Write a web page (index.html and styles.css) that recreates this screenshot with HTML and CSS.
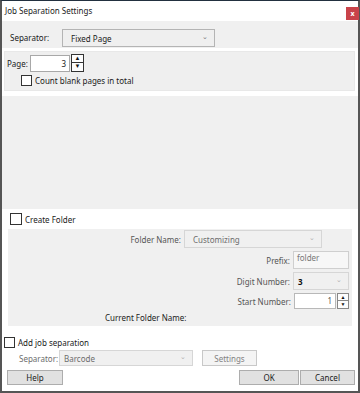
FILE: index.html
```html
<!DOCTYPE html>
<html lang="en">
<head>
    <meta charset="UTF-8">
    <title>Job Separation Settings</title>
    <link rel="stylesheet" href="styles.css">
</head>
<body>
    <div class="dialog">
        <div class="titlebar">
            <span class="title">Job Separation Settings</span>
            <span class="close">x</span>
        </div>

        <div class="sep-bar">
            <span class="sep-label">Separator:</span>
            <div class="select sel-main">Fixed Page<span class="chev">&#8964;</span></div>
        </div>

        <div class="page-panel">
            <div class="page-row">
                <span class="page-label">Page:</span>
                <div class="num-input page-input">3</div>
                <div class="spin">
                    <span class="spin-btn">&#9650;</span>
                    <span class="spin-btn">&#9660;</span>
                </div>
            </div>
            <label class="check-row count-row">
                <span class="box"></span>Count blank pages in total
            </label>
        </div>

        <div class="blank-area"></div>

        <label class="check-row folder-head">
            <span class="box"></span>Create Folder
        </label>

        <div class="folder-panel">
            <div class="f-row f-name">
                <span class="f-label">Folder Name:</span>
                <div class="select sel-folder disabled">Customizing<span class="chev">&#8964;</span></div>
            </div>
            <div class="f-row">
                <span class="f-label">Prefix:</span>
                <div class="text-input">folder</div>
            </div>
            <div class="f-row">
                <span class="f-label">Digit Number:</span>
                <div class="select sel-digit">3<span class="chev">&#8964;</span></div>
            </div>
            <div class="f-row">
                <span class="f-label">Start Number:</span>
                <div class="num-input start-input">1</div>
                <div class="spin small">
                    <span class="spin-btn">&#9650;</span>
                    <span class="spin-btn">&#9660;</span>
                </div>
            </div>
            <div class="current">Current Folder Name:</div>
        </div>

        <label class="check-row job-row">
            <span class="box"></span>Add job separation
        </label>
        <div class="job-sep">
            <span class="job-label">Separator:</span>
            <div class="select sel-job disabled">Barcode<span class="chev">&#8964;</span></div>
            <button class="btn btn-settings" disabled>Settings</button>
        </div>

        <div class="btn-row">
            <button class="btn btn-help">Help</button>
            <div class="btn-right">
                <button class="btn btn-ok">OK</button>
                <button class="btn btn-cancel">Cancel</button>
            </div>
        </div>
    </div>
</body>
</html>
```

FILE: styles.css
```css
body {
    margin: 0;
    padding: 0;
    background: #f0f0f0;
    font-family: 'Noto Sans', 'Open Sans', sans-serif;
    font-size: 8px;
    color: #1a1a1a;
}
.dialog {
    width: 356px;
    height: 390px;
    border: 2px solid #555;
    border-top: 1px solid #22303f;
    background: #fff;
    display: flex;
    flex-direction: column;
}
.titlebar {
    height: 20px;
    display: flex;
    align-items: center;
    justify-content: space-between;
    padding-left: 3px;
    box-sizing: border-box;
}
.title {
    margin-top: -1px;
}
.close {
    width: 13px;
    height: 13px;
    background: #c9434a;
    color: #fff;
    font-size: 7px;
    font-weight: bold;
    display: flex;
    align-items: center;
    justify-content: center;
    margin-top: 4px;
    margin-right: -1px;
}
.sep-bar {
    height: 27px;
    background: #f0f0f0;
    display: flex;
    align-items: flex-end;
    padding: 0 0 1px 8px;
    box-sizing: border-box;
}
.sep-label {
    width: 52px;
    height: 18px;
    line-height: 18px;
}
.select {
    height: 18px;
    box-sizing: border-box;
    border: 1px solid #b4b4b4;
    background: #efefef;
    display: flex;
    align-items: center;
    justify-content: space-between;
    padding: 0 6px 0 8px;
}
.select.disabled {
    border-color: #d6d6d6;
    color: #6d6d6d;
}
.chev {
    font-size: 7px;
    color: #777;
    margin-top: -4px;
}
.disabled .chev {
    color: #b0b0b0;
}
.sel-main {
    width: 153px;
}
.page-panel {
    margin: 3px 3px 0 2px;
    height: 40px;
    background: #efefef;
    border: 1px solid #e8e8e8;
    box-sizing: border-box;
}
.page-row {
    display: flex;
    align-items: center;
    margin-top: 2px;
}
.page-label {
    width: 23px;
    padding-left: 2px;
}
.num-input {
    height: 17px;
    box-sizing: border-box;
    border: 1px solid #a8a8a8;
    background: #fff;
    text-align: right;
    line-height: 15px;
    padding-right: 3px;
}
.page-input {
    width: 40px;
}
.spin {
    display: flex;
    flex-direction: column;
    margin-left: 1px;
}
.spin-btn {
    width: 13px;
    height: 9px;
    box-sizing: border-box;
    border: 1px solid #333;
    background: #fdfdfd;
    font-size: 6px;
    line-height: 7px;
    text-align: center;
    color: #111;
}
.spin-btn + .spin-btn {
    border-top: none;
}
.spin.small .spin-btn {
    width: 12px;
    height: 8px;
    font-size: 5px;
    line-height: 6px;
    border-color: #888;
}
.check-row {
    display: flex;
    align-items: center;
}
.box {
    width: 11px;
    height: 11px;
    box-sizing: border-box;
    border: 1px solid #333;
    background: #fff;
    margin-right: 3px;
}
.count-row {
    margin-top: 3px;
    padding-left: 16px;
}
.blank-area {
    margin-top: 5px;
    height: 113px;
    background: #f0f0f0;
}
.folder-head {
    height: 20px;
    padding-left: 8px;
}
.folder-head .box {
    width: 12px;
    height: 12px;
}
.folder-panel {
    margin: 0 6px;
    height: 97px;
    background: #f0f0f0;
    color: #555;
    padding-top: 1px;
    box-sizing: border-box;
}
.f-row {
    display: flex;
    justify-content: flex-end;
    align-items: center;
    padding-right: 3px;
    margin-bottom: 3px;
}
.f-row.f-name {
    padding-right: 30px;
}
.f-label {
    margin-right: 3px;
}
.sel-folder {
    width: 138px;
    background: #f0f0f0;
}
.text-input {
    width: 56px;
    height: 18px;
    box-sizing: border-box;
    border: 1px solid #cfcfcf;
    background: #f7f7f7;
    color: #777;
    padding: 0 3px;
    line-height: 12px;
}
.sel-digit {
    width: 56px;
    border-color: #d6d6d6;
    background: #f0f0f0;
    color: #111;
    font-weight: bold;
    padding-left: 4px;
}
.sel-digit .chev {
    color: #b0b0b0;
    font-weight: normal;
}
.start-input {
    width: 42px;
    height: 16px;
    border-color: #b8b8b8;
    line-height: 14px;
    color: #555;
}
.current {
    padding-left: 97px;
    margin-top: 3px;
    color: #222;
}
.job-row {
    margin-top: 11px;
    padding-left: 2px;
    height: 11px;
}
.job-sep {
    display: flex;
    align-items: center;
    margin-top: 2px;
    height: 16px;
}
.job-label {
    width: 40px;
    padding-left: 17px;
    color: #6d6d6d;
}
.sel-job {
    width: 134px;
    height: 16px;
    background: #f0f0f0;
    color: #1a1a1a;
    padding-left: 4px;
}
.btn {
    font-family: inherit;
    font-size: 8px;
    height: 15px;
    padding: 0;
    box-sizing: border-box;
    border: 1px solid #adadad;
    background: #e1e1e1;
    color: #1a1a1a;
}
.btn-settings {
    width: 55px;
    height: 16px;
    margin-left: 9px;
    background: #f4f4f4;
    border-color: #c8c8c8;
    color: #838383;
}
.btn-row {
    display: flex;
    justify-content: space-between;
    margin-top: 4px;
    padding: 0 3px 0 5px;
}
.btn-help {
    width: 56px;
}
.btn-right {
    display: flex;
    gap: 1px;
}
.btn-ok {
    width: 60px;
}
.btn-cancel {
    width: 55px;
}
```
